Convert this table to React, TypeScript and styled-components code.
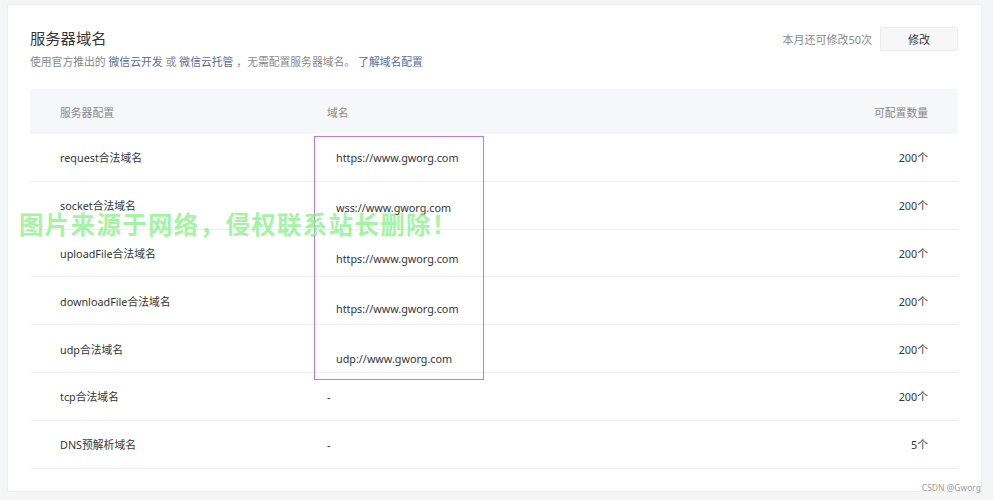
import React from "react";
import styled, { createGlobalStyle } from "styled-components";

const GlobalStyle = createGlobalStyle`
  html, body {
    margin: 0;
    padding: 0;
    background: #f4f5f7;
    font-family: "Noto Sans", "Noto Sans CJK SC", sans-serif;
  }
  #root { width: 993px; height: 500px; overflow: hidden; position: relative; }
`;

const Page = styled.div`
  width: 993px;
  height: 500px;
  padding: 4px 11px 0 7px;
  box-sizing: border-box;
  position: relative;
`;

const Card = styled.div`
  background: #fff;
  height: 488px;
  box-sizing: border-box;
  border: 1px solid #eceef1;
  border-radius: 2px;
  padding: 21px 23px 0 22px;
  position: relative;
`;

const Head = styled.div`
  display: flex;
  justify-content: space-between;
  align-items: flex-start;
`;

const TitleBlock = styled.div`
  display: flex;
  flex-direction: column;
  gap: 4px;
`;

const Title = styled.h1`
  margin: 0;
  font-size: 15.3px;
  line-height: 24px;
  font-weight: 400;
  color: #353535;
`;

const Sub = styled.p`
  margin: 0;
  font-size: 10.8px;
  line-height: 16px;
  color: #888;
`;

const Link = styled.a`
  color: #576b95;
  text-decoration: none;
  margin: 0 3px;
`;

const Actions = styled.div`
  display: flex;
  align-items: center;
  gap: 8px;
  margin-top: 1px;
`;

const Quota = styled.span`
  font-size: 11px;
  color: #888;
`;

const Btn = styled.button`
  width: 78px;
  height: 24px;
  border: 1px solid #ececec;
  background: #f7f7f7;
  border-radius: 2px;
  font-family: inherit;
  font-size: 11px;
  color: #353535;
  padding: 0;
`;

const Table = styled.div`
  margin-top: 19px;
  position: relative;
`;

const HeaderRow = styled.div`
  display: grid;
  grid-template-columns: 267px 1fr 200px;
  height: 45px;
  align-items: center;
  background: #f6f7f8;
  padding: 0 30px;
  font-size: 10.8px;
  color: #888;
`;

const Row = styled.div`
  display: grid;
  grid-template-columns: 267px 1fr 200px;
  height: 47.8px;
  box-sizing: border-box;
  align-items: center;
  padding: 0 30px;
  border-bottom: 1px solid #efefef;
  font-size: 10.8px;
  color: #353535;
`;

const Cell = styled.div<{ $right?: boolean }>`
  text-align: ${(p) => (p.$right ? "right" : "left")};
`;

const DomainBox = styled.div`
  position: absolute;
  left: 284px;
  top: 47px;
  width: 170px;
  height: 244px;
  box-sizing: border-box;
  border: 1px solid #c07ad0;
  padding: 14px 0 13px 21px;
  display: flex;
  flex-direction: column;
  justify-content: space-between;
  font-size: 10.8px;
  line-height: 14px;
  color: #353535;
`;

const Watermark = styled.div`
  position: absolute;
  left: 19px;
  top: 209px;
  font-size: 24.5px;
  font-weight: 700;
  letter-spacing: 1.3px;
  line-height: 32px;
  color: rgba(125, 238, 125, 0.7);
  white-space: nowrap;
  pointer-events: none;
`;

const Credit = styled.div`
  position: absolute;
  right: 12px;
  top: 482px;
  font-size: 8.5px;
  color: #9a9a9a;
`;

const rows = [
  { name: "request合法域名", domain: "", count: "200个" },
  { name: "socket合法域名", domain: "", count: "200个" },
  { name: "uploadFile合法域名", domain: "", count: "200个" },
  { name: "downloadFile合法域名", domain: "", count: "200个" },
  { name: "udp合法域名", domain: "", count: "200个" },
  { name: "tcp合法域名", domain: "-", count: "200个" },
  { name: "DNS预解析域名", domain: "-", count: "5个" },
];

const domains = [
  "https://www.gworg.com",
  "wss://www.gworg.com",
  "https://www.gworg.com",
  "https://www.gworg.com",
  "udp://www.gworg.com",
];

export default function App() {
  return (
    <>
      <GlobalStyle />
      <Page>
        <Card>
          <Head>
            <TitleBlock>
              <Title>服务器域名</Title>
              <Sub>
                使用官方推出的<Link>微信云开发</Link>或<Link>微信云托管</Link>，无需配置服务器域名。
                <Link>了解域名配置</Link>
              </Sub>
            </TitleBlock>
            <Actions>
              <Quota>本月还可修改50次</Quota>
              <Btn>修改</Btn>
            </Actions>
          </Head>
          <Table>
            <HeaderRow>
              <Cell>服务器配置</Cell>
              <Cell>域名</Cell>
              <Cell $right>可配置数量</Cell>
            </HeaderRow>
            {rows.map((r) => (
              <Row key={r.name}>
                <Cell>{r.name}</Cell>
                <Cell>{r.domain}</Cell>
                <Cell $right>{r.count}</Cell>
              </Row>
            ))}
            <DomainBox>
              {domains.map((d, i) => (
                <div key={i}>{d}</div>
              ))}
            </DomainBox>
          </Table>
        </Card>
        <Watermark>图片来源于网络，侵权联系站长删除！</Watermark>
        <Credit>CSDN @Gworg</Credit>
      </Page>
    </>
  );
}
